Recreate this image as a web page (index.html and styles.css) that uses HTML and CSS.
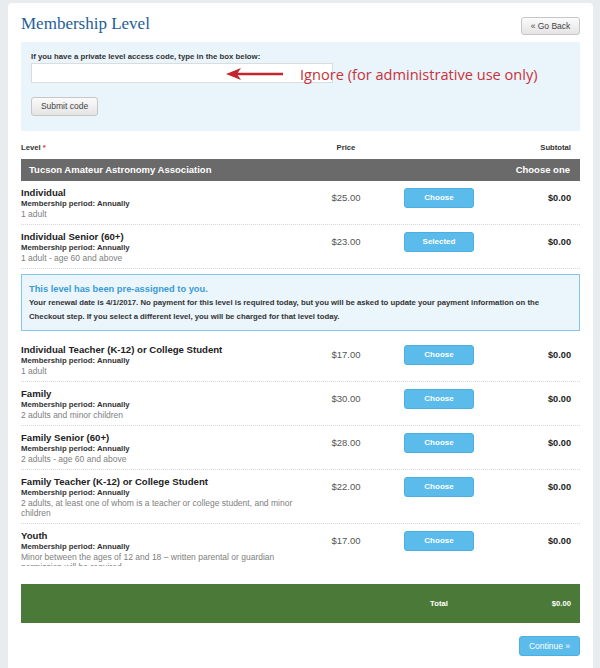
FILE: index.html
```html
<!DOCTYPE html>
<html>
<head>
    <meta charset="utf-8">
    <title>Membership Level</title>
    <link rel="stylesheet" href="styles.css">
</head>
<body>
    <div class="card">
        <div class="hd">
            <h2>Membership Level</h2>
            <span class="btn btn-gray back">&laquo; Go Back</span>
        </div>
        <div class="code-box">
            <label>If you have a private level access code, type in the box below:</label>
            <input class="code-input" type="text">
            <div class="note">
                <svg width="58" height="14" viewBox="0 0 58 14"><path d="M10 7 H57" stroke="#c1272d" stroke-width="2.6" fill="none"/><path d="M0 7 L15 1 L11 7 L15 13 Z" fill="#c1272d"/></svg>
                <span>Ignore (for administrative use only)</span>
            </div>
            <span class="btn btn-gray submit">Submit code</span>
        </div>

        <div class="cols grid-hd">
            <span>Level <i class="req">*</i></span>
            <span class="c">Price</span>
            <span></span>
            <span class="r">Subtotal</span>
        </div>
        <div class="group">
            <span>Tucson Amateur Astronomy Association</span>
            <span>Choose one</span>
        </div>

        <div class="levels">
            <div class="cols row">
                <div><div class="name">Individual</div><div class="period">Membership period: Annually</div><div class="desc">1 adult</div></div>
                <div class="price">$25.00</div>
                <span class="btn btn-blue choose">Choose</span>
                <div class="sub">$0.00</div>
            </div>
            <div class="cols row">
                <div><div class="name">Individual Senior (60+)</div><div class="period">Membership period: Annually</div><div class="desc">1 adult - age 60 and above</div></div>
                <div class="price">$23.00</div>
                <span class="btn btn-blue choose">Selected</span>
                <div class="sub">$0.00</div>
            </div>
            <div class="notice">
                <h4>This level has been pre-assigned to you.</h4>
                <p>Your renewal date is 4/1/2017. No payment for this level is required today, but you will be asked to update your payment information on the Checkout step. If you select a different level, you will be charged for that level today.</p>
            </div>
            <div class="cols row">
                <div><div class="name">Individual Teacher (K-12) or College Student</div><div class="period">Membership period: Annually</div><div class="desc">1 adult</div></div>
                <div class="price">$17.00</div>
                <span class="btn btn-blue choose">Choose</span>
                <div class="sub">$0.00</div>
            </div>
            <div class="cols row">
                <div><div class="name">Family</div><div class="period">Membership period: Annually</div><div class="desc">2 adults and minor children</div></div>
                <div class="price">$30.00</div>
                <span class="btn btn-blue choose">Choose</span>
                <div class="sub">$0.00</div>
            </div>
            <div class="cols row">
                <div><div class="name">Family Senior (60+)</div><div class="period">Membership period: Annually</div><div class="desc">2 adults - age 60 and above</div></div>
                <div class="price">$28.00</div>
                <span class="btn btn-blue choose">Choose</span>
                <div class="sub">$0.00</div>
            </div>
            <div class="cols row">
                <div><div class="name">Family Teacher (K-12) or College Student</div><div class="period">Membership period: Annually</div><div class="desc">2 adults, at least one of whom is a teacher or college student, and minor children</div></div>
                <div class="price">$22.00</div>
                <span class="btn btn-blue choose">Choose</span>
                <div class="sub">$0.00</div>
            </div>
            <div class="cols row">
                <div><div class="name">Youth</div><div class="period">Membership period: Annually</div><div class="desc">Minor between the ages of 12 and 18 &ndash; written parental or guardian permission will be required</div></div>
                <div class="price">$17.00</div>
                <span class="btn btn-blue choose">Choose</span>
                <div class="sub">$0.00</div>
            </div>
        </div>

        <div class="cols total">
            <span></span>
            <span></span>
            <span class="c">Total</span>
            <span class="r">$0.00</span>
        </div>
        <div class="foot">
            <span class="btn btn-blue continue">Continue &raquo;</span>
        </div>
    </div>
</body>
</html>
```

FILE: styles.css
```css
body { margin: 0; padding: 3px 7px 0 8px; background: #e8ecef; font-family: "Liberation Sans", Arial, sans-serif; color: #333; }
.card { width: 585px; min-height: 665px; box-sizing: border-box; background: #fff; border-radius: 4px 4px 0 0; padding: 0 13px 10px; }
.hd { display: flex; justify-content: space-between; align-items: flex-start; height: 39px; }
.hd h2 { margin: 11px 0 0; font: normal 17px/20px "Liberation Serif", serif; color: #235e98; }
.btn { display: inline-block; box-sizing: border-box; border-radius: 3px; text-align: center; font-size: 8.5px; cursor: pointer; }
.btn-gray { background: linear-gradient(#fbfbfb, #e4e4e4); border: 1px solid #c6c6c6; color: #444; }
.btn-blue { background: #5bbbea; border: 1px solid #4cafe1; color: #fff; }
.back { margin-top: 14px; width: 59px; height: 18px; line-height: 16px; }
.code-box { position: relative; background: #eaf4fb; padding: 10px 10px 15px; }
.code-box label { display: block; font-weight: bold; font-size: 7.8px; line-height: 9px; color: #333; }
.code-input { display: block; margin: 2px 0 0; width: 302px; height: 20px; box-sizing: border-box; border: 1px solid #dcdcdc; background: #fff; }
.submit { margin-top: 14px; width: 67px; height: 19px; line-height: 17px; }
.note { position: absolute; left: 205px; top: 24px; display: flex; align-items: center; }
.note span { margin-left: 16px; font: 14.6px/16px "Open Sans", sans-serif; color: #c8323a; }

.cols { display: grid; grid-template-columns: 285px 80px 106px 1fr; }
.cols .c { text-align: center; }
.cols .r { text-align: right; padding-right: 9px; }
.grid-hd { margin: 10px 0 4px; font-weight: bold; font-size: 7.7px; line-height: 14px; color: #333; }
.req { font-style: normal; color: #d33; }
.group { display: flex; justify-content: space-between; height: 22px; line-height: 22px; padding: 0 10px 0 8px; background: #6a6a6a; color: #fff; font-weight: bold; font-size: 9.5px; }

.levels { height: 385px; overflow: hidden; }
.row { padding: 6px 0 5px; border-bottom: 1px dotted #d6d6d6; align-items: start; }
.name { font-weight: bold; font-size: 9.6px; line-height: 12px; color: #222; }
.period { font-weight: bold; font-size: 7.75px; line-height: 10px; color: #333; }
.desc { font-size: 8.5px; line-height: 10px; color: #808080; }
.price { padding-top: 5px; font-size: 9.5px; line-height: 12px; color: #555; text-align: center; }
.choose { justify-self: center; margin-top: 1px; width: 70px; height: 20px; line-height: 18px; font-weight: bold; font-size: 8px; }
.sub { padding: 5px 9px 0 0; text-align: right; font-weight: bold; font-size: 9.2px; line-height: 12px; color: #222; }

.notice { margin: 5px 0 7px; border: 1px solid #85c5e8; background: #eaf5fc; padding: 8px 7px 6px; }
.notice h4 { margin: 0; font-weight: bold; font-size: 9.3px; line-height: 13px; color: #3b9bd3; }
.notice p { margin: 0; font-weight: bold; font-size: 7.75px; line-height: 14px; color: #333; }

.total { margin-top: 18px; height: 39px; line-height: 39px; background: #4b7a38; color: #fff; font-weight: bold; font-size: 7.7px; }
.foot { display: flex; justify-content: flex-end; margin-top: 13px; }
.continue { width: 61px; height: 20px; line-height: 18px; font-size: 8.5px; }
```
